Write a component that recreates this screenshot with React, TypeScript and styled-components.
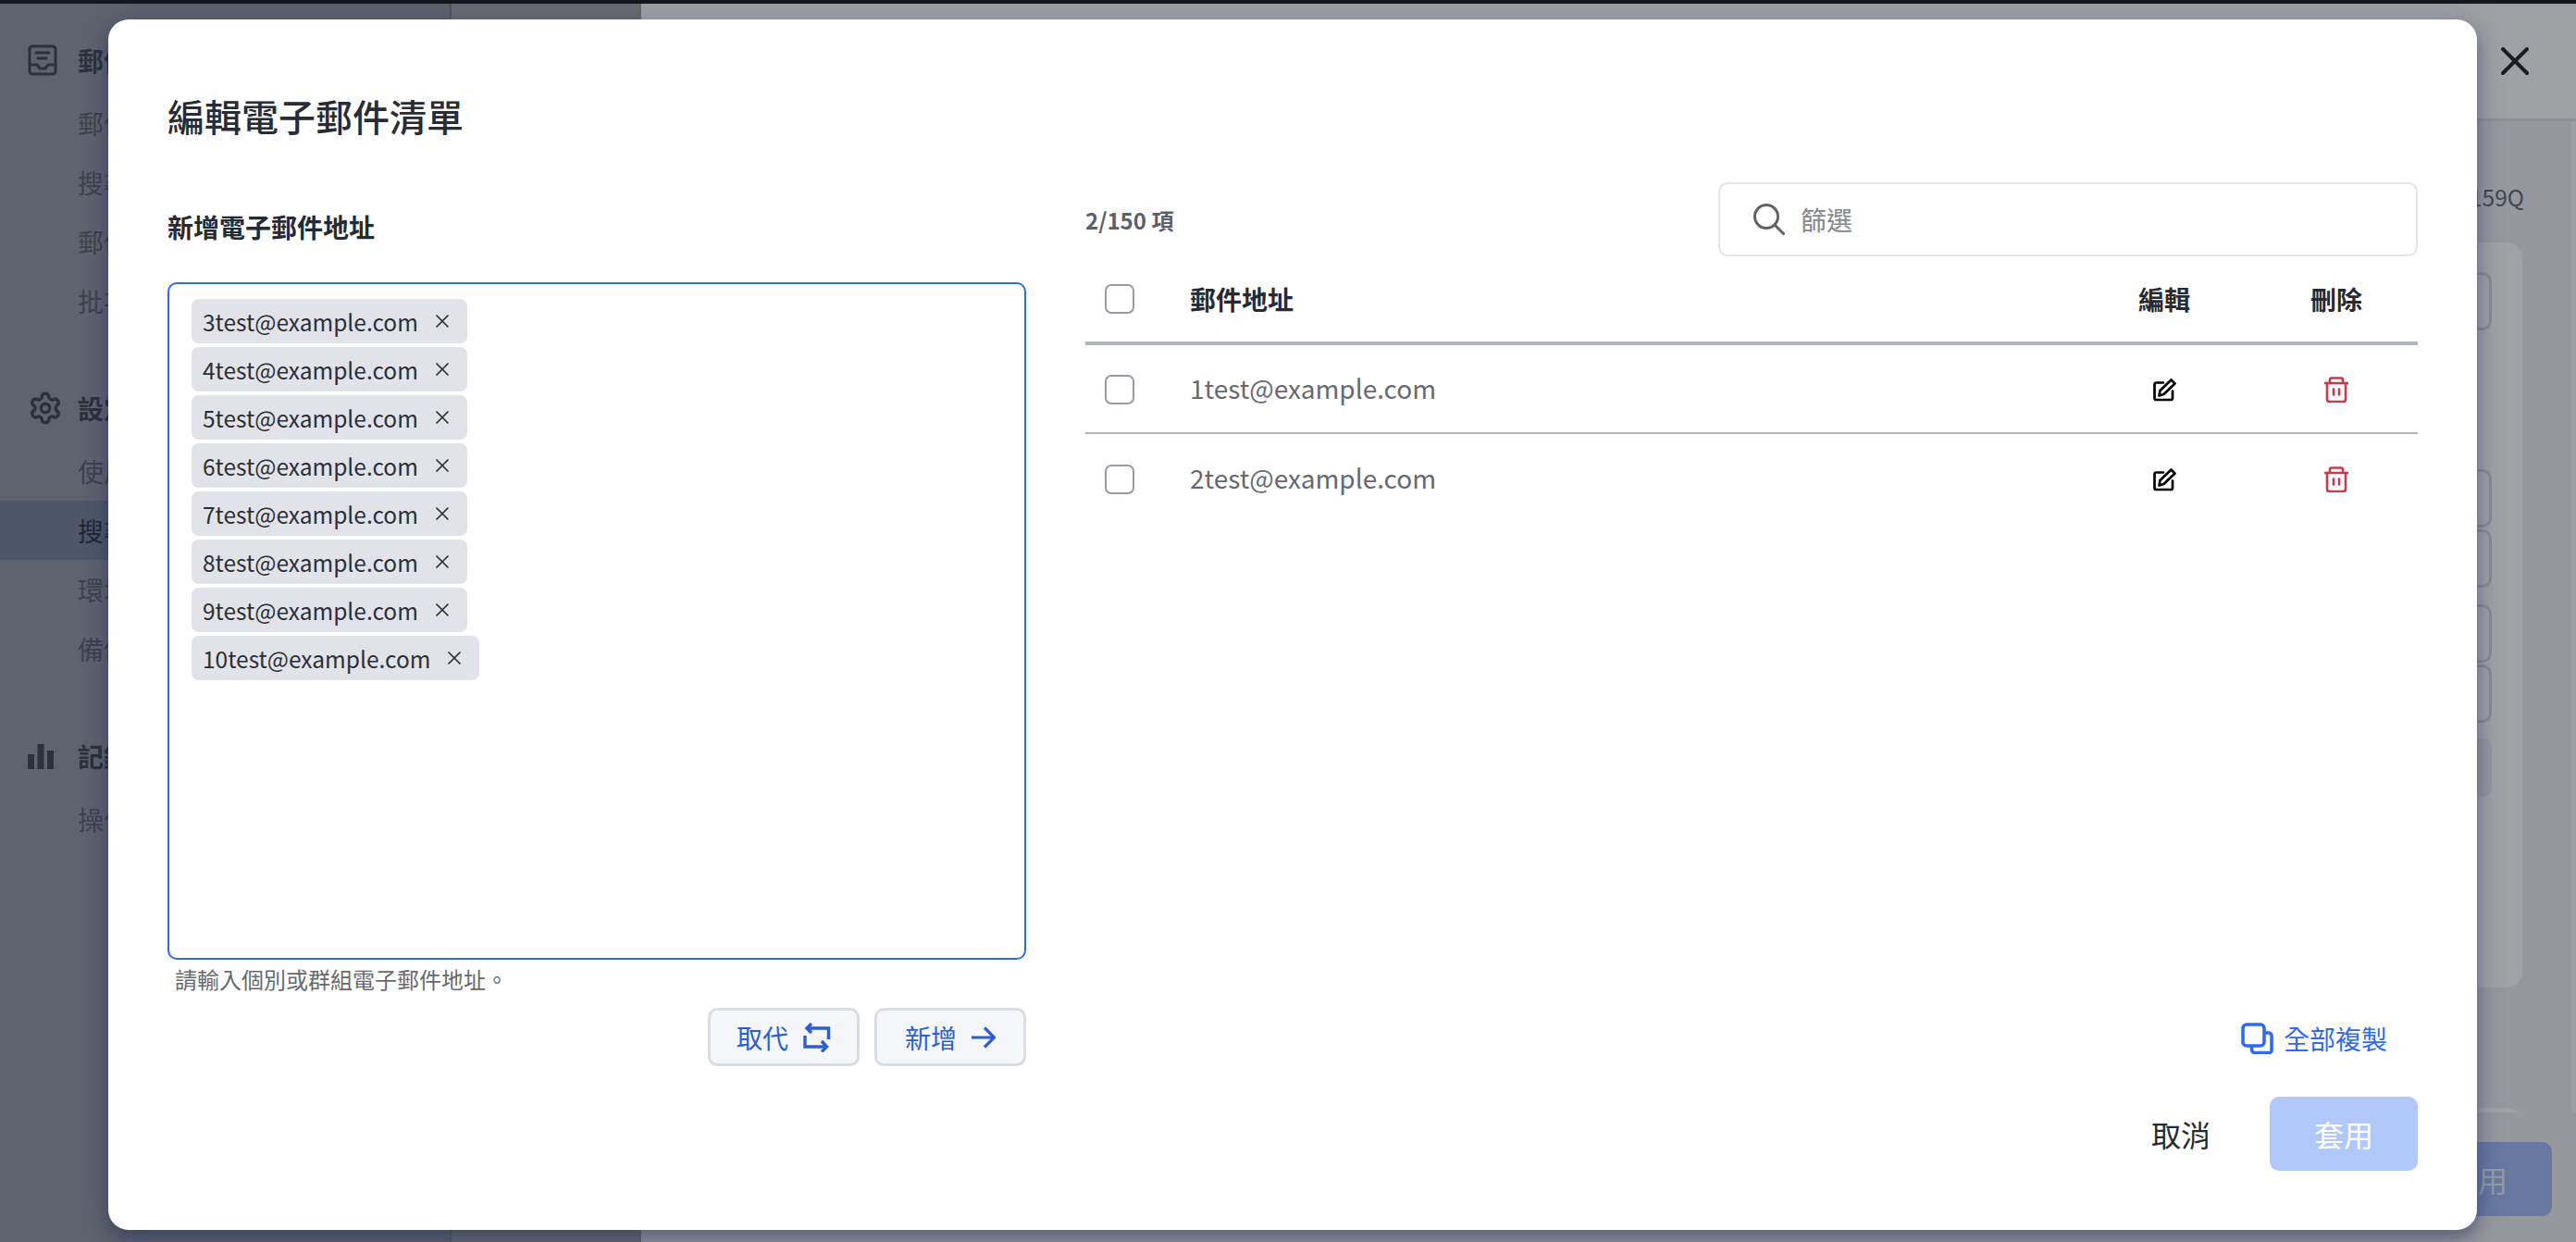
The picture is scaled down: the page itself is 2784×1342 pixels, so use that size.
import React from 'react';
import styled, { createGlobalStyle } from 'styled-components';
import { Settings } from 'lucide-react';

const GlobalStyle = createGlobalStyle`
  html, body {
    margin: 0;
    padding: 0;
    width: 2784px;
    height: 1342px;
    overflow: hidden;
  }
  * { box-sizing: border-box; }
  body {
    font-family: "Noto Sans CJK TC", "Noto Sans", sans-serif;
    color: #262a33;
  }
`;

const chips = ['3test', '4test', '5test', '6test', '7test', '8test', '9test', '10test'];
const rows = ['1test@example.com', '2test@example.com'];

const sideGroups = [
  { title: '郵件', icon: 'mail', items: ['郵件流', '搜尋器', '郵件庫', '批次檔'] },
  { title: '設定', icon: 'gear', items: ['使用者', '搜尋庫', '環境值', '備份檔'] },
  { title: '記錄', icon: 'chart', items: ['操作檔'] },
];

const ChipX = () => (
  <svg width="14" height="14" viewBox="0 0 14 14" fill="none" stroke="#2b2f38" strokeWidth="1.7" strokeLinecap="round">
    <path d="M1 1l12 12M13 1L1 13" />
  </svg>
);

const MailIcon = () => (
  <svg width="32" height="34" viewBox="0 0 32 34" fill="none" stroke="#2d313b" strokeWidth="3" strokeLinecap="round" strokeLinejoin="round">
    <rect x="2" y="2" width="28" height="30" rx="3" />
    <path d="M9 9h14M11 15h9M2 22h8l3 4h6l3-4h8" />
  </svg>
);

const ChartIcon = () => (
  <svg width="28" height="27" viewBox="0 0 28 27" fill="#2d313b">
    <rect x="0" y="11" width="7" height="16" />
    <rect x="10.5" y="0" width="7" height="27" />
    <rect x="21" y="7" width="7" height="20" />
  </svg>
);

const CloseIcon = () => (
  <svg width="32" height="32" viewBox="0 0 32 32" fill="none" stroke="#1a1d24" strokeWidth="4" strokeLinecap="round">
    <path d="M3 3l26 26M29 3L3 29" />
  </svg>
);

const SwapIcon = () => (
  <svg width="30" height="32" viewBox="0 0 30 32" fill="none" stroke="#2a5fd4" strokeWidth="3.4" strokeLinejoin="miter">
    <path d="M9 1L4 6l5 5M4 6h23.5v12" />
    <path d="M2 14v12h23M20 20l5.5 6-5.5 5.5" />
  </svg>
);

const ArrowIcon = () => (
  <svg width="26" height="24" viewBox="0 0 26 24" fill="none" stroke="#2a5fd4" strokeWidth="3.2">
    <path d="M0 12h24M14 1.5L24.5 12 14 22.5" />
  </svg>
);

const SearchIcon = () => (
  <svg width="34" height="34" viewBox="0 0 34 34" fill="none" stroke="#5f6368" strokeWidth="3" strokeLinecap="round">
    <circle cx="14" cy="14" r="12.5" />
    <path d="M23.5 23.5l9 9" />
  </svg>
);

const EditIcon = () => (
  <svg width="25" height="25" viewBox="0 0 25 25" fill="none" stroke="#000" strokeWidth="2.7" strokeLinejoin="round" strokeLinecap="round">
    <path d="M11 4.5H3.5a2 2 0 0 0-2 2V21a2 2 0 0 0 2 2H19a2 2 0 0 0 2-2v-7.5" />
    <path d="M6.5 18.5l1-5.5L19.5 1.5l4 4-12 11.5z" />
  </svg>
);

const TrashIcon = () => (
  <svg width="26" height="28" viewBox="0 0 26 28" fill="none" stroke="#c9384b" strokeWidth="2.6" strokeLinecap="round" strokeLinejoin="round">
    <path d="M0.5 7h25M6 7V3.5a2 2 0 0 1 2-2h10a2 2 0 0 1 2 2V7" />
    <path d="M3 7v17.5a2.5 2.5 0 0 0 2.5 2.5h15a2.5 2.5 0 0 0 2.5-2.5V7" />
    <path d="M10 13.5v6M16 13.5v6" />
  </svg>
);

const CopyIcon = () => (
  <svg width="35" height="34" viewBox="0 0 35 34" fill="none" stroke="#2f6bf0" strokeWidth="3.6" strokeLinejoin="round">
    <rect x="2" y="2" width="23" height="23" rx="4" />
    <path d="M25 11h5a3.5 3.5 0 0 1 3 3v16a2.5 2.5 0 0 1-2.5 2.5H15a3.5 3.5 0 0 1-3.5-3.5v-4" />
  </svg>
);

const App: React.FC = () => {
  return (
    <Page>
      <GlobalStyle />
      <TopBar />
      <Shell>
        <Sidebar>
          {sideGroups.map((group) => (
            <SideGroup key={group.title}>
              <SideHeading>
                <SideIcon>
                  {group.icon === 'mail' && <MailIcon />}
                  {group.icon === 'gear' && <Settings size={38} strokeWidth={2.2} color="#2d313b" />}
                  {group.icon === 'chart' && <ChartIcon />}
                </SideIcon>
                {group.title}
              </SideHeading>
              {group.items.map((item) => (
                <SideItem key={item} $active={item === '搜尋庫'}>
                  {item}
                </SideItem>
              ))}
            </SideGroup>
          ))}
        </Sidebar>
        <SubPanel />
        <Main>
          <MainHeader>
            <CloseButton>
              <CloseIcon />
            </CloseButton>
          </MainHeader>
          <MainBody>
            <MainContent>
              <Serial>159Q</Serial>
              <Card>
                <GhostInput />
                <GhostInput $top={150} />
                <GhostInput $top={2} />
                <GhostInput $top={18} />
                <GhostInput $top={2} />
                <GhostFill />
              </Card>
              <NextCard />
            </MainContent>
            <ScrollStrip />
          </MainBody>
          <MainFooter>
            <GhostApply>套用</GhostApply>
          </MainFooter>
        </Main>
      </Shell>

      <Modal>
        <ModalTitle>編輯電子郵件清單</ModalTitle>
        <ModalBody>
          <LeftCol>
            <FieldLabel>新增電子郵件地址</FieldLabel>
            <TagBox>
              {chips.map((chip) => (
                <Chip key={chip}>
                  <span>{chip}@example.com</span>
                  <ChipX />
                </Chip>
              ))}
            </TagBox>
            <Helper>請輸入個別或群組電子郵件地址。</Helper>
            <Actions>
              <GhostButton>
                取代
                <SwapIcon />
              </GhostButton>
              <GhostButton>
                新增
                <ArrowIcon />
              </GhostButton>
            </Actions>
          </LeftCol>
          <RightCol>
            <ListTop>
              <Count>2/150 項</Count>
              <SearchBox>
                <SearchIcon />
                <span>篩選</span>
              </SearchBox>
            </ListTop>
            <HeadRow>
              <CheckCell>
                <CheckBox />
              </CheckCell>
              <div>郵件地址</div>
              <CenterCell>編輯</CenterCell>
              <CenterCell>刪除</CenterCell>
            </HeadRow>
            {rows.map((row, i) => (
              <BodyRow key={row} $last={i === rows.length - 1}>
                <CheckCell>
                  <CheckBox />
                </CheckCell>
                <AddressCell>{row}</AddressCell>
                <CenterCell>
                  <EditIcon />
                </CenterCell>
                <CenterCell>
                  <TrashIcon />
                </CenterCell>
              </BodyRow>
            ))}
            <CopyAll>
              <CopyIcon />
              全部複製
            </CopyAll>
            <ModalFooter>
              <CancelButton>取消</CancelButton>
              <ApplyButton>套用</ApplyButton>
            </ModalFooter>
          </RightCol>
        </ModalBody>
      </Modal>
    </Page>
  );
};

export default App;

const Page = styled.div`
  position: relative;
  width: 2784px;
  height: 1342px;
  display: flex;
  flex-direction: column;
  overflow: hidden;
  background: #96989d;
`;

const TopBar = styled.div`
  height: 4px;
  background: #16181d;
`;

const Shell = styled.div`
  flex: 1;
  min-height: 0;
  display: flex;
`;

const Sidebar = styled.aside`
  width: 486px;
  padding-top: 29px;
  display: flex;
  flex-direction: column;
  gap: 52px;
  background: #5f636d;
`;

const SideGroup = styled.div`
  display: flex;
  flex-direction: column;
`;

const SideHeading = styled.div`
  height: 64px;
  margin-bottom: 4px;
  padding-left: 30px;
  display: flex;
  align-items: center;
  font-size: 28px;
  font-weight: 700;
  color: #2d313b;
`;

const SideIcon = styled.span`
  width: 54px;
  display: flex;
  align-items: center;
`;

const SideItem = styled.div<{ $active?: boolean }>`
  height: 64px;
  padding-left: 84px;
  display: flex;
  align-items: center;
  font-size: 28px;
  color: ${(p) => (p.$active ? '#232833' : '#3e424c')};
  background: ${(p) => (p.$active ? '#4d5769' : 'transparent')};
`;

const SubPanel = styled.div`
  width: 207px;
  background: #696b72;
  border-left: 2px solid #55585f;
`;

const Main = styled.main`
  flex: 1;
  min-width: 0;
  display: flex;
  flex-direction: column;
`;

const MainHeader = styled.header`
  height: 127px;
  padding: 0 50px 1px 0;
  display: flex;
  align-items: center;
  justify-content: flex-end;
  background: #a0a1a5;
  border-bottom: 3px solid #8e9095;
`;

const CloseButton = styled.div`
  display: flex;
`;

const MainBody = styled.div`
  flex: 1;
  min-height: 0;
  display: flex;
  overflow: hidden;
`;

const MainContent = styled.div`
  flex: 1;
  padding: 64px 51px 0 0;
  display: flex;
  flex-direction: column;
`;

const Serial = styled.div`
  height: 36px;
  line-height: 36px;
  margin-right: -2px;
  text-align: right;
  font-size: 24.5px;
  color: #45484f;
`;

const Card = styled.section`
  flex: none;
  margin-top: 31px;
  height: 805px;
  padding: 32px 33px 0 0;
  border-radius: 16px;
  background: #a1a2a6;
`;

const GhostInput = styled.div<{ $top?: number }>`
  height: 63px;
  margin-top: ${(p) => p.$top ?? 0}px;
  border: 3px solid #8b8d93;
  border-radius: 10px;
`;

const GhostFill = styled.div`
  height: 63px;
  margin-top: 17px;
  border-radius: 10px;
  background: #96989e;
`;

const NextCard = styled.div`
  flex: none;
  margin-top: 130px;
  height: 60px;
  border-radius: 16px 16px 0 0;
  background: #a1a2a6;
`;

const ScrollStrip = styled.div`
  width: 7px;
  background: #9d9ea2;
  border-left: 1px solid #909297;
`;

const MainFooter = styled.footer`
  height: 140px;
  padding: 32px 26px 0 0;
  display: flex;
  justify-content: flex-end;
  align-items: flex-start;
  background: #96989d;
`;

const GhostApply = styled.div`
  width: 160px;
  height: 80px;
  display: flex;
  align-items: center;
  justify-content: center;
  border-radius: 10px;
  font-size: 32px;
  color: #9499a6;
  background: #6779a0;
`;

const Modal = styled.div`
  position: absolute;
  top: 21px;
  left: 117px;
  width: 2560px;
  height: 1308px;
  padding: 76px 64px 0 64px;
  border-radius: 22px;
  background: #fff;
  box-shadow: 0 10px 16px rgba(23, 37, 84, 0.34), 0 4px 32px rgba(23, 37, 84, 0.22);
`;

const ModalTitle = styled.h2`
  margin: 0 0 44px;
  height: 56px;
  line-height: 56px;
  font-size: 40px;
  font-weight: 500;
  color: #282c35;
`;

const ModalBody = styled.div`
  display: grid;
  grid-template-columns: 928px 1440px;
  column-gap: 64px;
`;

const LeftCol = styled.div`
  display: flex;
  flex-direction: column;
`;

const FieldLabel = styled.div`
  margin: 28px 0 40px;
  height: 40px;
  line-height: 40px;
  font-size: 28px;
  font-weight: 700;
  color: #262a33;
`;

const TagBox = styled.div`
  height: 732px;
  padding: 16px 24px;
  display: flex;
  flex-direction: column;
  align-items: flex-start;
  gap: 4px;
  border: 2.5px solid #2f6bed;
  border-radius: 10px;
`;

const Chip = styled.div`
  height: 48px;
  padding: 0 20px 0 12px;
  display: flex;
  align-items: center;
  gap: 19px;
  font-size: 24.5px;
  color: #2b2f38;
  border-radius: 8px;
  background: #e2e3e8;
`;

const Helper = styled.div`
  margin-top: 3px;
  padding-left: 8px;
  height: 36px;
  line-height: 36px;
  font-size: 24px;
  color: #666a70;
`;

const Actions = styled.div`
  margin-top: 13px;
  display: flex;
  justify-content: flex-end;
  gap: 16px;
`;

const GhostButton = styled.div`
  width: 164px;
  height: 63px;
  display: flex;
  align-items: center;
  justify-content: center;
  gap: 16px;
  font-size: 28px;
  color: #2a5fd4;
  border: 3px solid #dcdde0;
  border-radius: 10px;
  background: #f5f7fa;
`;

const RightCol = styled.div`
  height: 1068px;
  display: flex;
  flex-direction: column;
`;

const ListTop = styled.div`
  height: 80px;
  display: flex;
  align-items: center;
  justify-content: space-between;
`;

const Count = styled.div`
  font-size: 24px;
  font-weight: 700;
  color: #5c6068;
`;

const SearchBox = styled.div`
  width: 756px;
  height: 80px;
  padding-left: 36px;
  display: flex;
  align-items: center;
  gap: 17px;
  font-size: 28px;
  color: #85888d;
  border: 2.5px solid #e4e5e8;
  border-radius: 10px;
`;

const tableGrid = `
  display: grid;
  grid-template-columns: 113px 1fr 196px 176px;
  align-items: center;
  font-size: 28px;
`;

const HeadRow = styled.div`
  ${tableGrid}
  height: 96px;
  font-weight: 700;
  color: #262a33;
  border-bottom: 4px solid #b0b5c0;
`;

const BodyRow = styled.div<{ $last?: boolean }>`
  ${tableGrid}
  height: 96px;
  padding-top: 2px;
  color: #666a70;
  border-bottom: ${(p) => (p.$last ? 'none' : '2px solid #b0b5c0')};
`;

const AddressCell = styled.div`
  padding-bottom: 4px;
`;

const CheckCell = styled.div`
  padding-left: 21px;
  display: flex;
`;

const CheckBox = styled.div`
  width: 32px;
  height: 32px;
  border: 2.5px solid #979ba6;
  border-radius: 7px;
  background: #fff;
`;

const CenterCell = styled.div`
  display: flex;
  justify-content: center;
`;

const CopyAll = styled.div`
  margin-top: auto;
  margin-right: 33px;
  align-self: flex-end;
  display: flex;
  align-items: center;
  gap: 11px;
  font-size: 28px;
  color: #2f6bf0;
`;

const ModalFooter = styled.div`
  margin-top: 43px;
  display: flex;
  align-items: center;
  justify-content: flex-end;
  gap: 64px;
`;

const CancelButton = styled.div`
  font-size: 32px;
  color: #262a33;
`;

const ApplyButton = styled.div`
  width: 160px;
  height: 80px;
  display: flex;
  align-items: center;
  justify-content: center;
  font-size: 32px;
  color: #fff;
  border-radius: 10px;
  background: #b0c8fa;
`;
